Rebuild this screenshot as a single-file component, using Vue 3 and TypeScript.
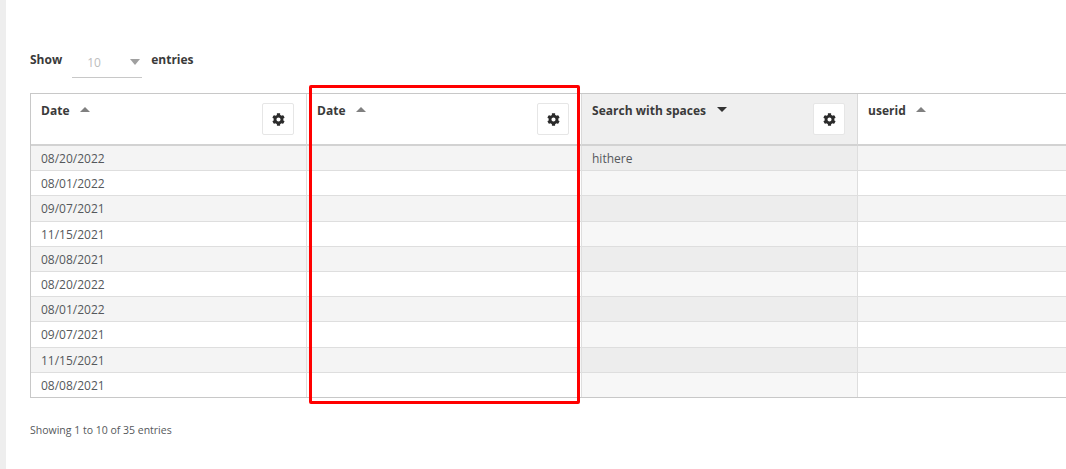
<script setup lang="ts">
const dates: string[] = [
  '08/20/2022', '08/01/2022', '09/07/2021', '11/15/2021', '08/08/2021',
  '08/20/2022', '08/01/2022', '09/07/2021', '11/15/2021', '08/08/2021',
]
const headers = [
  { label: 'Date', dir: 'up', gear: true, active: false },
  { label: 'Date', dir: 'up', gear: true, active: false },
  { label: 'Search with spaces', dir: 'down', gear: true, active: true },
  { label: 'userid', dir: 'up', gear: false, active: false },
]
</script>

<template>
  <div class="page">
    <aside class="strip"></aside>
    <main class="content">
      <div class="length">
        <span class="lbl">Show</span>
        <div class="select"><span class="val">10</span><span class="caret"></span></div>
        <span class="lbl">entries</span>
      </div>
      <table class="grid">
        <colgroup>
          <col class="c1" /><col class="c2" /><col class="c3" /><col class="c4" />
        </colgroup>
        <thead>
          <tr>
            <th v-for="(h, i) in headers" :key="i" :class="{ active: h.active }">
              <div class="head">
                <span class="name">{{ h.label }}</span>
                <span :class="['sort', h.dir, { dark: h.active }]"></span>
                <button v-if="h.gear" class="gear" type="button" aria-label="Column settings">
                  <svg width="13" height="13" viewBox="0 0 512 512">
                    <path fill="#2b2b2b" d="M487.4 315.7l-42.6-24.6c4.3-23.2 4.3-47 0-70.2l42.6-24.6c4.9-2.8 7.1-8.6 5.5-14-11.1-35.6-30-67.8-54.7-94.6-3.8-4.1-10-5.1-14.8-2.3L380.8 110c-17.9-15.4-38.5-27.3-60.8-35.1V25.8c0-5.6-3.9-10.5-9.4-11.7-36.7-8.2-74.3-7.8-109.2 0-5.5 1.2-9.4 6.1-9.4 11.7V75c-22.2 7.9-42.8 19.8-60.8 35.1L88.7 85.5c-4.9-2.8-11-1.9-14.8 2.3-24.7 26.7-43.6 58.9-54.7 94.6-1.7 5.4.6 11.2 5.5 14L67.3 221c-4.3 23.2-4.3 47 0 70.2l-42.6 24.6c-4.9 2.8-7.1 8.6-5.5 14 11.1 35.6 30 67.8 54.7 94.6 3.8 4.1 10 5.1 14.8 2.3l42.6-24.6c17.9 15.4 38.5 27.3 60.8 35.1v49.2c0 5.6 3.9 10.5 9.4 11.7 36.7 8.2 74.3 7.8 109.2 0 5.5-1.2 9.4-6.1 9.4-11.7v-49.2c22.2-7.9 42.8-19.8 60.8-35.1l42.6 24.6c4.9 2.8 11 1.9 14.8-2.3 24.7-26.7 43.6-58.9 54.7-94.6 1.5-5.5-.7-11.3-5.6-14.1zM256 336c-44.1 0-80-35.9-80-80s35.9-80 80-80 80 35.9 80 80-35.9 80-80 80z" />
                  </svg>
                </button>
              </div>
            </th>
          </tr>
        </thead>
        <tbody>
          <tr v-for="(d, i) in dates" :key="i" :class="{ odd: i % 2 === 0 }">
            <td>{{ d }}</td>
            <td></td>
            <td class="active">{{ i === 0 ? 'hithere' : '' }}</td>
            <td></td>
          </tr>
        </tbody>
      </table>
      <div class="info">Showing 1 to 10 of 35 entries</div>
    </main>
    <div class="highlight"></div>
  </div>
</template>

<style>
html, body { margin: 0; overflow: hidden; background: #fff; }
</style>

<style scoped>
.page {
  position: relative;
  display: flex;
  width: 1066px;
  height: 469px;
  overflow: hidden;
  font-family: "Open Sans", sans-serif;
  color: #3c4043;
}
.strip { width: 6px; flex: none; background: #eeeeee; }
.content { flex: none; width: 1100px; padding: 47px 0 0 24px; box-sizing: border-box; }
.length { display: flex; align-items: center; height: 31px; }
.lbl { font-size: 12px; font-weight: 700; color: #3a3a3a; position: relative; top: -3px; }
.select {
  display: flex;
  align-items: center;
  justify-content: space-between;
  width: 70px;
  height: 30px;
  margin: 0 9px 0 10px;
  padding: 0 2px 0 15px;
  box-sizing: border-box;
  border-bottom: 1px solid #c8c8c8;
}
.val { font-size: 12px; color: #bdbdbd; }
.caret {
  width: 0; height: 0;
  margin-right: 0;
  border-left: 5px solid transparent;
  border-right: 5px solid transparent;
  border-top: 6px solid #a0a0a0;
}
.grid {
  table-layout: fixed;
  border-collapse: separate;
  border-spacing: 0;
  width: 1100px;
  margin-top: 15px;
  border-top: 1px solid #c8c8c8;
  border-left: 1px solid #c8c8c8;
  border-bottom: 1px solid #c8c8c8;
  font-size: 12px;
}
.c1 { width: 276px; }
.c2 { width: 275px; }
.c3 { width: 276px; }
.c4 { width: 273px; }
th {
  height: 50px;
  padding: 0;
  text-align: left;
  vertical-align: top;
  border-right: 1px solid #d9d9d9;
  border-bottom: 2px solid #d2d2d2;
  background: #fff;
}
th.active { background: #efefef; }
.head { position: relative; display: flex; align-items: flex-start; height: 50px; padding: 9px 0 0 10px; box-sizing: border-box; }
.name { font-size: 12px; font-weight: 700; color: #3a3a3a; line-height: 16px; letter-spacing: 0.02px; }
.sort { width: 0; height: 0; margin: 4px 0 0 10px; border-left: 5px solid transparent; border-right: 5px solid transparent; }
.sort.up { border-bottom: 5px solid #808080; }
.sort.down { border-top: 5px solid #333; margin-top: 4px; margin-left: 11px; }
.gear {
  position: absolute;
  right: 12px;
  top: 9px;
  display: flex;
  align-items: center;
  justify-content: center;
  width: 32px;
  height: 32px;
  padding: 0;
  box-sizing: border-box;
  background: #fff;
  border: 1px solid #e6e6e6;
  border-radius: 2px;
}
td {
  height: 25.2px;
  padding: 2px 0 0 10px;
  box-sizing: border-box;
  font-size: 12px;
  line-height: 16px;
  color: #55585c;
  border-right: 1px solid #dedede;
  border-bottom: 1px solid #dedede;
  background: #fff;
}
tbody tr:last-child td { border-bottom: 0; height: 24.4px; }
td.active { background: #f7f7f7; }
tr.odd td { background: #f4f4f4; }
tr.odd td.active { background: #ededed; }
.info { margin-top: 24px; font-size: 10.5px; color: #55585c; line-height: 16px; }
.highlight {
  position: absolute;
  left: 309px;
  top: 85px;
  width: 271px;
  height: 319px;
  box-sizing: border-box;
  border: 3px solid #ff0000;
  border-radius: 2px;
}
</style>
